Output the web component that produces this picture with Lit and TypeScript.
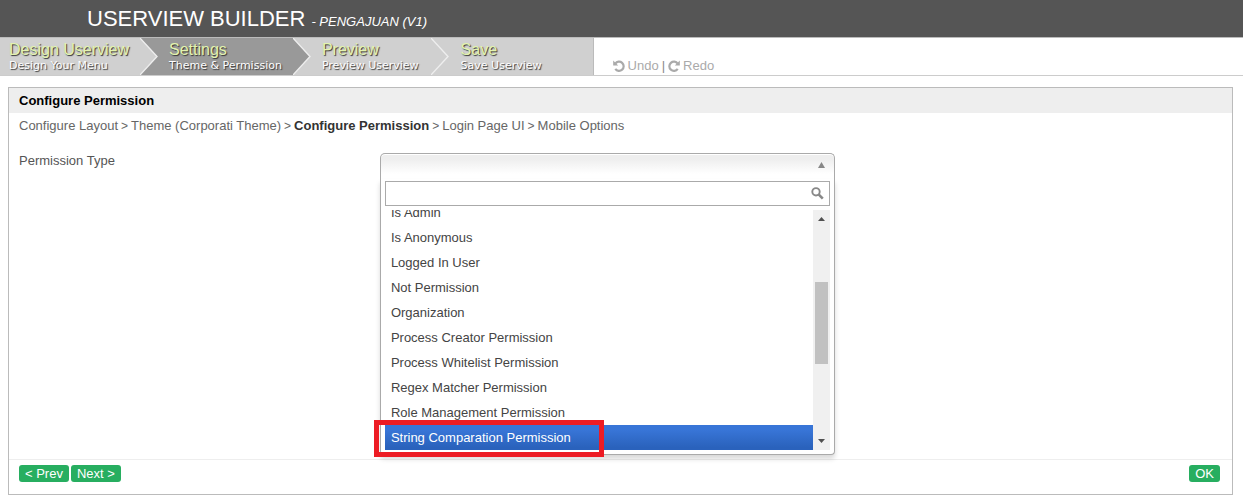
import { LitElement, html, css, svg, nothing } from "lit";
import { customElement, property } from "lit/decorators.js";
import { classMap } from "lit/directives/class-map.js";

interface Step {
  title: string;
  note: string;
}

const STEPS: Step[] = [
  { title: "Design Userview", note: "Design Your Menu" },
  { title: "Settings", note: "Theme & Permission" },
  { title: "Preview", note: "Preview Userview" },
  { title: "Save", note: "Save Userview" },
];

const PAGES = [
  "Configure Layout",
  "Theme (Corporati Theme)",
  "Configure Permission",
  "Login Page UI",
  "Mobile Options",
];

const PERMISSIONS = [
  "Is Admin",
  "Is Anonymous",
  "Logged In User",
  "Not Permission",
  "Organization",
  "Process Creator Permission",
  "Process Whitelist Permission",
  "Regex Matcher Permission",
  "Role Management Permission",
  "String Comparation Permission",
];

@customElement("step-bar")
class StepBar extends LitElement {
  @property({ type: Number }) active = 1;

  static styles = css`
    :host {
      display: flex;
      border-right: 1px solid #bbb;
      background: #d0d0d0;
    }
    .step {
      display: flex;
      color: #fff;
      text-decoration: none;
      white-space: nowrap;
    }
    .text {
      display: block;
      padding: 3px 12px 0 11px;
    }
    .step:first-child .text {
      padding: 3px 11px 0 9px;
    }
    .step:last-child .text {
      min-width: 120px;
      padding-left: 12px;
    }
    .current .text {
      padding-right: 11px;
      background: #999;
    }
    .title {
      display: block;
      font-size: 16px;
      line-height: 18px;
      color: #e3f3ae;
      text-shadow: 1px 1px 1px #333;
    }
    .note {
      display: block;
      font: 11px/13px Verdana, "DejaVu Sans", sans-serif;
      text-shadow: 1px 1px 1px #333;
    }
    svg {
      display: block;
      width: 18px;
      height: 37px;
    }
    .light {
      fill: #d0d0d0;
    }
    .dark {
      fill: #999;
    }
    .edge {
      fill: none;
      stroke: #eee;
      stroke-width: 1.4;
    }
  `;

  private tone(index: number) {
    return index === this.active ? "dark" : "light";
  }

  private chevron(index: number) {
    return html`<svg viewBox="0 0 18 37" aria-hidden="true">
      ${svg`<rect class=${this.tone(index + 1)} width="18" height="37"></rect>
      <path class=${this.tone(index)} d="M0 0L17 18.500L0 37z"></path>
      <path class="edge" d="M-1 -1L17 18.500L-1 38"></path>`}
    </svg>`;
  }

  render() {
    return STEPS.map(
      (step, i) => html`<a
        href="#step-${i + 1}"
        class=${classMap({ step: true, current: i === this.active })}
      >
        <span class="text">
          <span class="title">${step.title}</span>
          <span class="note">${step.note}</span>
        </span>
        ${i < STEPS.length - 1 ? this.chevron(i) : nothing}
      </a>`
    );
  }
}

@customElement("permission-picker")
class PermissionPicker extends LitElement {
  @property() highlighted = "String Comparation Permission";

  static styles = css`
    :host {
      display: block;
      position: relative;
      width: 455px;
    }
    * {
      box-sizing: border-box;
    }
    .field {
      display: flex;
      align-items: center;
      justify-content: flex-end;
      width: 100%;
      height: 26px;
      padding: 0 9px 3px;
      border: 1px solid #aaa;
      border-bottom: 0;
      border-radius: 5px 5px 0 0;
      background: linear-gradient(#eee 20%, #fff 80%);
      box-shadow: inset 0 1px 0 #fff;
    }
    .menu {
      position: absolute;
      top: 26px;
      left: 0;
      width: 100%;
      padding: 2px 4px 4px;
      border: 1px solid #aaa;
      border-top: 0;
      border-radius: 0 0 4px 4px;
      background: #fff;
      box-shadow: 0 4px 5px rgba(0, 0, 0, 0.15);
    }
    .search {
      display: flex;
      align-items: center;
      height: 25px;
      padding-right: 5px;
      border: 1px solid #aaa;
    }
    .search input {
      flex: 1;
      min-width: 0;
      padding: 0 5px;
      border: 0;
      outline: 0;
      background: none;
      font: inherit;
    }
    .results {
      display: flex;
      height: 240px;
      margin-top: 4px;
    }
    .list {
      display: flex;
      flex: 1;
      flex-direction: column;
      justify-content: flex-end;
      margin: 0;
      padding: 0;
      overflow: hidden;
      list-style: none;
    }
    .option {
      flex: none;
      height: 25px;
      padding: 0 6px;
      line-height: 25px;
      color: #444;
    }
    .on {
      color: #fff;
      background: linear-gradient(#3875d7 20%, #2a62bc 90%);
    }
    .track {
      display: flex;
      flex-direction: column;
      align-items: center;
      width: 17px;
      background: #f0f0f0;
    }
    .track svg {
      flex: none;
    }
    .before {
      flex: 55;
    }
    .thumb {
      flex: 82;
      width: 13px;
      background: #c1c1c1;
    }
    .after {
      flex: 69;
    }
    .callout {
      position: absolute;
      left: -7px;
      bottom: -3px;
      width: 230px;
      height: 37px;
      border: 5px solid #ed1c24;
      pointer-events: none;
    }
  `;

  render() {
    return html`
      <button class="field" type="button" aria-label="Permission Type" aria-haspopup="listbox" aria-expanded="true">
        <svg width="7" height="6" viewBox="0 0 7 6" aria-hidden="true">
          <path d="M3.500 0L7 6H0z" fill="#888"></path>
        </svg>
      </button>
      <div class="menu">
        <div class="search">
          <input type="text" aria-label="Search permissions" autocomplete="off" />
          <svg width="13" height="13" viewBox="0 0 13 13" aria-hidden="true">
            <circle cx="5" cy="4.800" r="3.700" fill="none" stroke="#888" stroke-width="1.900"></circle>
            <path d="M7.600 7.400L11.800 11.600" stroke="#888" stroke-width="2.600"></path>
          </svg>
        </div>
        <div class="results">
          <ul class="list" role="listbox" aria-label="Permission Type">
            ${PERMISSIONS.map(
              (name) => html`<li
                class=${classMap({ option: true, on: name === this.highlighted })}
                role="option"
                aria-selected=${name === this.highlighted ? "true" : "false"}
              >${name}</li>`
            )}
          </ul>
          <div class="track" aria-hidden="true">
            <svg width="17" height="17" viewBox="0 0 17 17"><path d="M8.500 7L12 11H5z" fill="#505050"></path></svg>
            <div class="before"></div>
            <div class="thumb"></div>
            <div class="after"></div>
            <svg width="17" height="17" viewBox="0 0 17 17"><path d="M5 6H12L8.500 10z" fill="#505050"></path></svg>
          </div>
        </div>
        <div class="callout"></div>
      </div>
    `;
  }
}

@customElement("app-root")
class AppRoot extends LitElement {
  static styles = css`
    :host {
      display: block;
      font: 13px/15px "Liberation Sans", Arial, sans-serif;
      color: #555;
      background: #fff;
    }
    .banner {
      display: flex;
      align-items: baseline;
      gap: 6px;
      height: 37px;
      padding-left: 87px;
      color: #fff;
      background: #555;
      line-height: 37px;
    }
    .banner h1 {
      margin: 0;
      font-size: 22px;
      font-weight: 400;
    }
    .banner em {
      font-size: 13px;
    }
    .toolbar {
      display: flex;
      height: 37px;
      border-top: 1px solid #bbb;
      border-bottom: 1px solid #ccc;
    }
    .history {
      display: flex;
      align-items: flex-end;
      gap: 3px;
      padding: 0 0 2px 19px;
      color: #888;
    }
    .history button {
      display: flex;
      align-items: center;
      gap: 3px;
      padding: 0;
      border: 0;
      background: none;
      font: inherit;
      color: #aaa;
    }
    .panel {
      margin: 11px 10px 0 8px;
      border: 1px solid #bbb;
    }
    .panel h2 {
      margin: 0;
      padding: 5px 10px;
      font-size: 13px;
      line-height: 15px;
      color: #000;
      background: #eee;
    }
    .trail {
      padding: 5px 10px;
      color: #666;
    }
    .trail a {
      color: inherit;
      text-decoration: none;
    }
    .trail .here {
      font-weight: 700;
      color: #333;
    }
    .sep {
      margin: 0 3px;
      font-size: 12px;
      line-height: 12px;
    }
    .row {
      display: flex;
      align-items: flex-start;
      min-height: 321px;
      padding: 15px 10px 0;
      box-sizing: border-box;
    }
    .label {
      width: 30%;
    }
    .actions {
      display: flex;
      gap: 2px;
      padding: 5px 12px 12px 10px;
      border-top: 1px solid #eee;
    }
    .actions button {
      height: 17px;
      padding: 0 6px;
      border: 0;
      border-radius: 3px;
      background: #27ae60;
      color: #fff;
      font: inherit;
      line-height: 17px;
    }
    .actions .ok {
      margin-left: auto;
    }
  `;

  private arrow(flip: boolean) {
    return html`<svg width="12" height="12" viewBox="0 0 12 12" aria-hidden="true">
      <g transform=${flip ? "translate(12 0) scale(-1 1)" : "translate(0 0)"}>
        <path d="M2.300 3.600A4.600 4.600 0 1 1 2.300 8.900" fill="none" stroke="#aaa" stroke-width="2.200"></path>
        <path d="M0.200 0.500V5.500H5.200z" fill="#aaa"></path>
      </g>
    </svg>`;
  }

  render() {
    return html`
      <header class="banner">
        <h1>USERVIEW BUILDER</h1>
        <em>- PENGAJUAN (V1)</em>
      </header>
      <nav class="toolbar">
        <step-bar .active=${1}></step-bar>
        <div class="history">
          <button type="button">${this.arrow(false)}Undo</button>
          <span>|</span>
          <button type="button">${this.arrow(true)}Redo</button>
        </div>
      </nav>
      <main class="panel">
        <h2>Configure Permission</h2>
        <div class="trail">
          ${PAGES.map(
            (page, i) =>
              html`${i ? html`<span class="sep">&gt;</span>` : nothing}<a href="#page-${i + 1}" class=${classMap({ here: i === 2 })}>${page}</a>`
          )}
        </div>
        <div class="row">
          <span class="label">Permission Type</span>
          <permission-picker></permission-picker>
        </div>
        <div class="actions">
          <button type="button">&lt; Prev</button>
          <button type="button">Next &gt;</button>
          <button type="button" class="ok">OK</button>
        </div>
      </main>
    `;
  }
}
